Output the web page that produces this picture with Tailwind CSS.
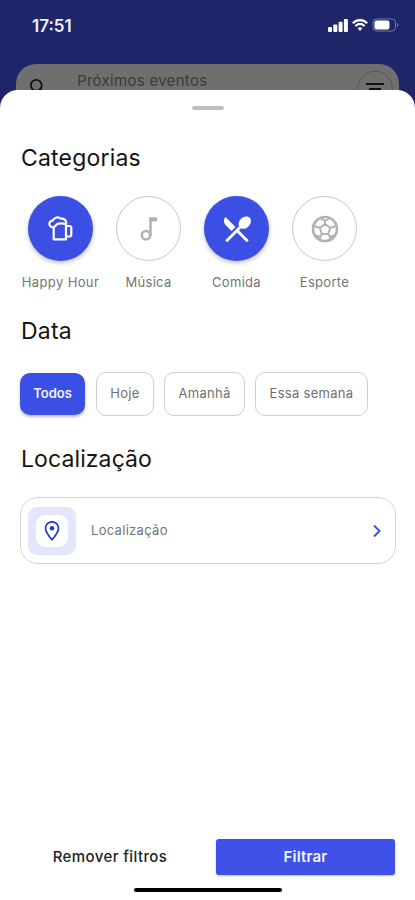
<!DOCTYPE html>
<html lang="pt-BR">
<head>
<meta charset="utf-8">
<meta name="viewport" content="width=device-width, initial-scale=1">
<title>Filtros</title>
<script src="https://cdn.jsdelivr.net/npm/@tailwindcss/browser@4"></script>
</head>
<body class="bg-[#1f2569] font-['Inter',sans-serif]">
<div class="w-[415px] h-[900px] overflow-hidden flex flex-col">
  <header class="h-[112px] shrink-0">
    <div class="h-[64px] flex justify-between pl-8 pr-[16px] pt-[13px]">
      <span class="text-[17px] leading-[26px] font-semibold text-[#eef0ff]">17:51</span>
      <div class="flex items-start gap-1 pt-[5px]">
        <svg class="w-5 h-[14px]" viewBox="0 0 20 14" fill="#fff"><rect x="0" y="9" width="4" height="5" rx="1"/><rect x="5.3" y="6.5" width="4" height="7.500" rx="1"/><rect x="10.600" y="3.800" width="4" height="10.200" rx="1"/><rect x="15.900" y="1" width="4" height="13" rx="1"/></svg>
        <svg class="w-4 h-[14px]" viewBox="0 0 16 14" fill="none" stroke="#fff" stroke-width="2.200"><path d="M.8 5.300C5 1.100 11 1.100 15.200 5.300M3.400 8.100c2.800-2.600 6.400-2.600 9.200 0"/><path d="M5.600 10.300c1.500-1.300 3.300-1.300 4.800 0L8 12.900z" fill="#fff" stroke="none"/></svg>
        <svg class="w-[27px] h-[14px]" viewBox="0 0 27 14"><rect x="1" y="1" width="22.500" height="12" rx="3.500" fill="none" stroke="#7278a8"/><rect x="2.500" y="2.500" width="15" height="9" rx="2" fill="#fff"/><path d="M25 5v4c2-1 2-3 0-4z" fill="#7278a8"/></svg>
      </div>
    </div>
    <div class="mx-4 h-[46px] rounded-[20px] bg-[#6f6f6f] flex items-start pl-[13px] pr-[6px] pt-[6px]">
      <svg class="w-[18px] h-[18px] mt-[8px]" viewBox="0 0 18 18" fill="none" stroke="#111" stroke-width="1.800"><circle cx="7.300" cy="7.300" r="5.400"/><path d="M11.500 11.500l5 5"/></svg>
      <span class="ml-[30px] mt-px text-[15px] leading-5 tracking-[0.300px] text-[#3a3a3a]">Próximos eventos</span>
      <svg class="ml-auto w-[36px] h-[36px]" viewBox="0 0 36 36" fill="none"><circle cx="18" cy="18.500" r="17.300" stroke="#555"/><path d="M9 14h18M12 19h12M15 24h6" stroke="#111" stroke-width="2"/></svg>
    </div>
  </header>
  <main class="relative -mt-[22px] flex-1 flex flex-col bg-white rounded-t-[18px]">
    <div class="mx-auto mt-4 w-8 h-1 rounded-full bg-[#bfbfbf]"></div>
    <section class="px-5 pt-[34px]">
      <h2 class="pl-px text-[23px] leading-7 tracking-[0.200px] text-[#151515]">Categorias</h2>
      <div class="flex mt-[24px] -ml-[3.500px]">
        <div class="w-[88px] flex flex-col items-center">
          <div class="size-[65px] rounded-full bg-[#3c4fe5] flex items-center justify-center shadow-[0_2px_4px_#0004]">
            <svg class="w-[27px] h-[28px]" viewBox="0 0 27 28" fill="none" stroke="#fff" stroke-width="2.200" stroke-linejoin="round" stroke-linecap="round"><path d="M6.700 13v11.300h12.300V9.500M19 11h3.300a2 2 0 0 1 2 2v6.500a2 2 0 0 1-2 2H19"/><path d="M6.200 12.300C3.500 12.300 2 10.300 2.400 8.300 2.900 6.300 4.600 5.600 6 5.300 7.300 2.300 11.500 1.400 14 3.700c2.600-.6 5 .9 5.300 4.300M6.200 12.300C8.300 12.300 8.600 9 11.500 8.600c2.700-.4 4.300-.6 7.500.9"/></svg>
          </div>
          <span class="mt-[12px] text-[13px] leading-[18px] tracking-[0.370px] text-[#747474] whitespace-nowrap">Happy Hour</span>
        </div>
        <div class="w-[88px] flex flex-col items-center">
          <div class="size-[65px] rounded-full border border-[#c8c8c8] flex items-center justify-center">
            <svg class="w-[18px] h-[25px]" viewBox="0 0 18 25" fill="none" stroke="#b2b2b2"><circle cx="6" cy="19.200" r="4.200" stroke-width="2.500"/><path d="M10.500 20V1.500" stroke-width="2.500"/><path d="M9.300 3.300H17" stroke-width="4"/></svg>
          </div>
          <span class="mt-[12px] text-[13px] leading-[18px] tracking-[0.300px] text-[#747474]">Música</span>
        </div>
        <div class="w-[88px] flex flex-col items-center">
          <div class="size-[65px] rounded-full bg-[#3c4fe5] flex items-center justify-center shadow-[0_2px_4px_#0004]">
            <svg class="w-[34px] h-[34px]" viewBox="0 0 24 24" fill="#fff"><path d="M8.100 13.340l2.830-2.830L3.910 3.500a4.008 4.008 0 0 0 0 5.660l4.190 4.180zm6.780-1.810c1.530.71 3.680.21 5.270-1.380 1.910-1.910 2.280-4.650.81-6.120-1.460-1.460-4.200-1.100-6.120.81-1.590 1.590-2.090 3.740-1.380 5.270L3.700 19.870l1.410 1.410L12 14.410l6.880 6.880 1.410-1.410L13.410 13l1.470-1.470z"/></svg>
          </div>
          <span class="mt-[12px] text-[13px] leading-[18px] tracking-[0.300px] text-[#747474]">Comida</span>
        </div>
        <div class="w-[88px] flex flex-col items-center">
          <div class="size-[65px] rounded-full border border-[#c8c8c8] flex items-center justify-center">
            <svg class="size-[28px]" viewBox="0 0 28 28" fill="none" stroke="#b2b2b2" stroke-width="2" stroke-linejoin="round"><circle cx="14" cy="14" r="12" stroke-width="2.600"/><path d="M14 9l5.200 3.800-2 6.200h-6.400l-2-6.200zM9 3l5 3 5-3M2.500 10.500l3.200 1.500 3.100.8M25.500 10.500L22.300 12l-3.100.8M14 6v3M10.800 19L9 22v3M17.200 19l1.800 3v3M3.500 20l5.500 2M24.500 20L19 22"/></svg>
          </div>
          <span class="mt-[12px] text-[13px] leading-[18px] tracking-[0.300px] text-[#747474]">Esporte</span>
        </div>
      </div>
    </section>
    <section class="px-5 pt-[26px]">
      <h2 class="pl-px text-[23px] leading-7 tracking-[0.200px] text-[#151515]">Data</h2>
      <div class="flex mt-[27px] text-[13px] tracking-[0.300px] text-[#707070] whitespace-nowrap">
        <button class="w-[65px] h-[42px] mt-px rounded-[10px] bg-[#3c4fe5] text-[#f2f3ff] font-semibold tracking-normal shadow-[0_2px_3px_#0004]">Todos</button>
        <button class="ml-[11px] w-[58px] h-[44px] rounded-[10px] border border-[#cfcfcf]">Hoje</button>
        <button class="ml-[10px] w-[81px] h-[44px] rounded-[10px] border border-[#cfcfcf]">Amanhã</button>
        <button class="ml-[10px] w-[113px] h-[44px] rounded-[10px] border border-[#cfcfcf]">Essa semana</button>
      </div>
    </section>
    <section class="px-5 pt-[29px]">
      <h2 class="pl-px text-[23px] leading-7 tracking-[0.100px] text-[#151515]">Localização</h2>
      <div class="mt-[24px] w-[376px] h-[67px] rounded-[18px] border border-[#d2d2d2] flex items-center pl-[7px] pr-[13px]">
        <div class="size-12 rounded-[9px] bg-[#e4e6fb] flex items-center justify-center">
          <div class="size-8 rounded-[9px] bg-white flex items-center justify-center">
            <svg class="w-4 h-5" viewBox="0 0 16 20" fill="none" stroke="#2337c9" stroke-width="1.700"><path d="M8 18.800C3.500 13.700 1.500 10.500 1.500 7.300a6.500 6.500 0 0 1 13 0c0 3.200-2 6.400-6.500 11.500z"/><circle cx="8" cy="7.300" r="2.300" fill="#2337c9" stroke="none"/></svg>
          </div>
        </div>
        <span class="ml-[15px] text-[13px] tracking-[0.300px] text-[#747474]">Localização</span>
        <svg class="ml-auto w-[10px] h-[14px]" viewBox="0 0 10 14" fill="none" stroke="#4053dc" stroke-width="2"><path d="M2 1.500L7.500 7 2 12.500"/></svg>
      </div>
    </section>
    <footer class="mt-auto">
      <div class="flex pl-5 pr-[20px]">
        <button class="w-[180px] h-9 text-[15px] tracking-[0.400px] font-medium text-[#222]">Remover filtros</button>
        <button class="ml-[16px] w-[179px] h-9 rounded-[3px] bg-[#3f52e7] text-[15px] tracking-[0.200px] font-semibold text-[#f0f2ff] shadow-[0_1px_2px_#0004]">Filtrar</button>
      </div>
      <div class="ml-[134px] mt-[13px] mb-2 w-[148px] h-1 rounded-full bg-black"></div>
    </footer>
  </main>
</div>
</body>
</html>
